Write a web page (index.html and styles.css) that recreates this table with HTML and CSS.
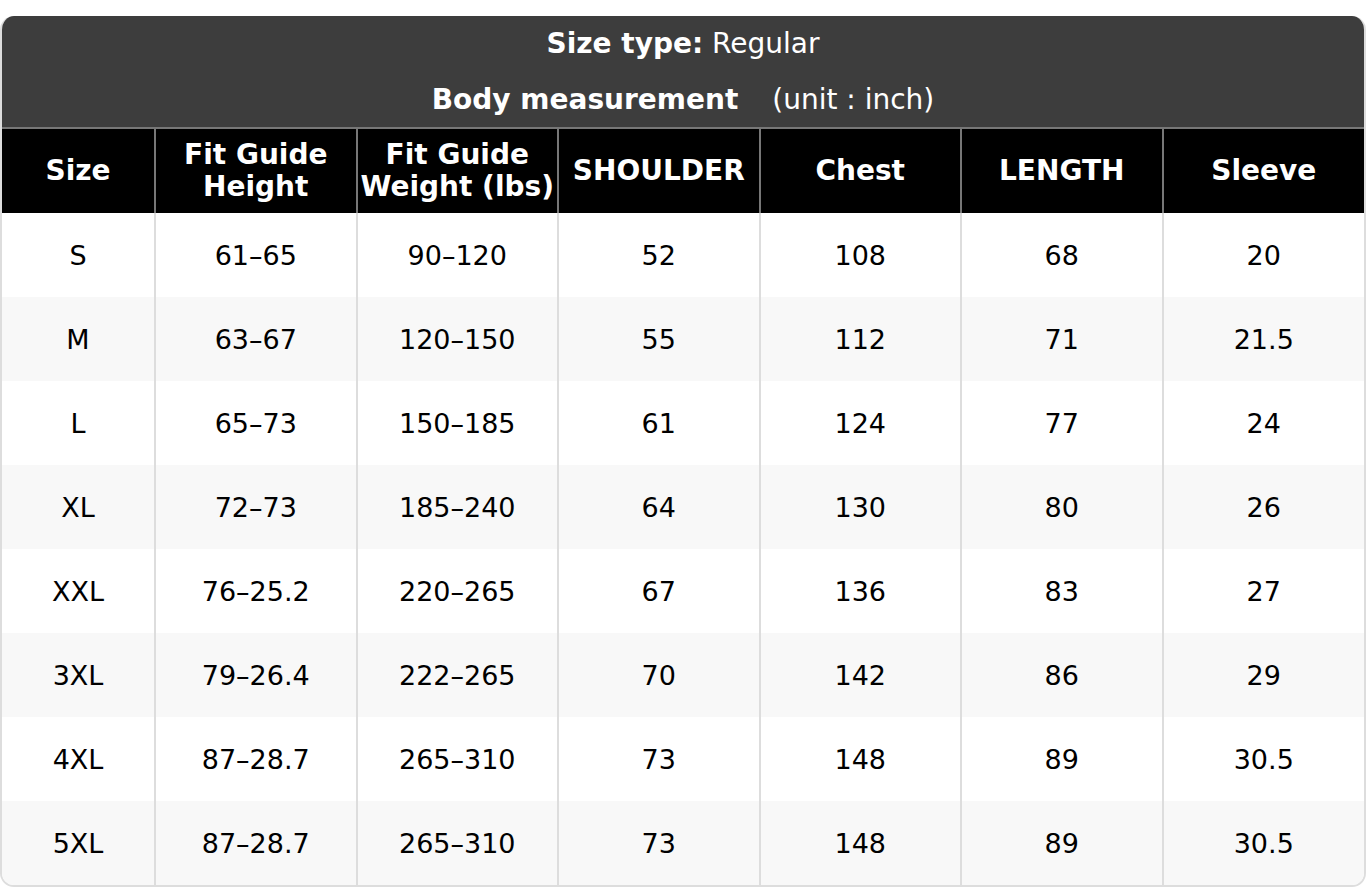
FILE: index.html
```html
<!DOCTYPE html>
<html>
<head>
<meta charset="utf-8">
<link rel="stylesheet" href="styles.css">
</head>
<body>
<div class="card">
  <div class="title">
    <div class="title-line"><b>Size type:</b> Regular</div>
    <div class="title-line"><b>Body measurement</b><span class="unit">(unit : inch)</span></div>
  </div>
  <table class="chart">
    <colgroup>
      <col class="c-size">
      <col><col><col><col><col><col>
    </colgroup>
    <thead>
      <tr>
        <th>Size</th>
        <th>Fit Guide<br>Height</th>
        <th>Fit Guide<br>Weight (lbs)</th>
        <th>SHOULDER</th>
        <th>Chest</th>
        <th>LENGTH</th>
        <th>Sleeve</th>
      </tr>
    </thead>
    <tbody>
      <tr><td>S</td><td>61–65</td><td>90–120</td><td>52</td><td>108</td><td>68</td><td>20</td></tr>
      <tr><td>M</td><td>63–67</td><td>120–150</td><td>55</td><td>112</td><td>71</td><td>21.5</td></tr>
      <tr><td>L</td><td>65–73</td><td>150–185</td><td>61</td><td>124</td><td>77</td><td>24</td></tr>
      <tr><td>XL</td><td>72–73</td><td>185–240</td><td>64</td><td>130</td><td>80</td><td>26</td></tr>
      <tr><td>XXL</td><td>76–25.2</td><td>220–265</td><td>67</td><td>136</td><td>83</td><td>27</td></tr>
      <tr><td>3XL</td><td>79–26.4</td><td>222–265</td><td>70</td><td>142</td><td>86</td><td>29</td></tr>
      <tr><td>4XL</td><td>87–28.7</td><td>265–310</td><td>73</td><td>148</td><td>89</td><td>30.5</td></tr>
      <tr><td>5XL</td><td>87–28.7</td><td>265–310</td><td>73</td><td>148</td><td>89</td><td>30.5</td></tr>
    </tbody>
  </table>
</div>
</body>
</html>
```

FILE: styles.css
```css
html, body {
  margin: 0;
  padding: 0;
  background: #ffffff;
}
body {
  padding-top: 16px;
  font-family: "DejaVu Sans", sans-serif;
  font-size: 27px;
  color: #000;
}
.card {
  border: 2px solid #dddddd;
  border-top: none;
  border-radius: 14px;
  overflow: hidden;
  width: 1366px;
  box-sizing: border-box;
}
.title {
  background: #3d3d3d;
  color: #ffffff;
  text-align: center;
  font-size: 28px;
  border-bottom: 2px solid #777777;
}
.title-line {
  height: 56px;
  line-height: 56px;
}
.title-line:last-child {
  height: 55px;
  line-height: 55px;
}
.unit {
  margin-left: 34px;
}
.chart {
  width: 100%;
  border-collapse: collapse;
  table-layout: fixed;
}
.c-size {
  width: 153px;
}
.chart th {
  background: #000;
  color: #fff;
  font-weight: bold;
  font-size: 28px;
  height: 84px;
  padding: 0;
  line-height: 32px;
  border-left: 2px solid #777777;
  text-align: center;
  vertical-align: middle;
}
.chart td {
  height: 84px;
  padding: 0;
  text-align: center;
  vertical-align: middle;
  border-left: 2px solid #dddddd;
}
.chart th:first-child,
.chart td:first-child {
  border-left: none;
}
.chart tbody tr:nth-child(even) td {
  background: #f8f8f8;
}
```
